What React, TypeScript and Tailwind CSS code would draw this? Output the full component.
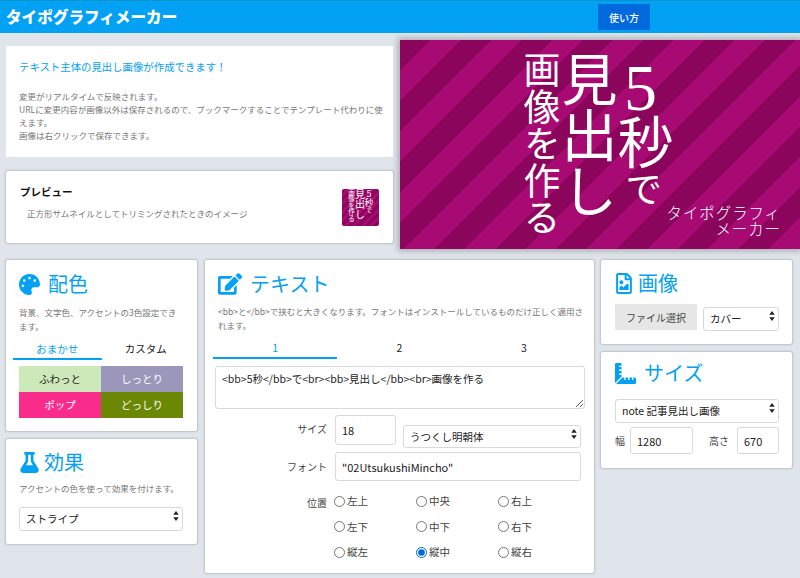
import { useState } from "react";
import { FaPalette, FaEdit, FaFlask, FaRegFileImage, FaRulerCombined } from "react-icons/fa";

const fontStack = "font-['Noto_Sans_CJK_JP','Noto_Sans',sans-serif]";
const stripes =
  "bg-[repeating-linear-gradient(135deg,#8b055c_0,#8b055c_21.5px,#a80a74_21.5px,#a80a74_43px)]";
const card = "bg-white rounded-[2px] shadow-[0_0_2px_1px_rgba(0,0,0,0.16)]";

const presets = [
  { label: "ふわっと", className: "bg-[#cde9b9] text-[#222]" },
  { label: "しっとり", className: "bg-[#9a97ba] text-white" },
  { label: "ポップ", className: "bg-[#f92b8b] text-white" },
  { label: "どっしり", className: "bg-[#6a8803] text-white" },
];

const positions = ["左上", "中央", "右上", "左下", "中下", "右下", "縦左", "縦中", "縦右"];

function Heading({ icon, label, gap }: { icon: React.ReactNode; label: string; gap: string }) {
  return (
    <div className={`flex items-center text-[#03a1f4] ${gap}`}>
      {icon}
      <span className="text-[20px] leading-[24px]">{label}</span>
    </div>
  );
}

function SelectBox({ value, className }: { value: string; className: string }) {
  return (
    <div className={`relative ${className}`}>
      <select
        defaultValue={value}
        className="h-full w-full appearance-none rounded-[3px] border border-[#d9d9d9] bg-white pl-[6px] text-[10.5px] text-[#222] outline-none"
      >
        <option>{value}</option>
      </select>
      <svg viewBox="0 0 6 11" className="pointer-events-none absolute right-[4px] top-1/2 h-[10px] w-[6px] -translate-y-1/2" fill="#222">
        <path d="M3 0 L6 4 H0 Z M3 11 L0 7 H6 Z" />
      </svg>
    </div>
  );
}

function TextBox({ value, className }: { value: string; className: string }) {
  return (
    <input
      readOnly
      value={value}
      className={`rounded-[3px] border border-[#d9d9d9] bg-white pl-[6px] text-[11px] text-[#222] outline-none ${className}`}
    />
  );
}

function Tabs({ items, tabWidth }: { items: string[]; tabWidth: string }) {
  return (
    <div className="flex">
      {items.map((t, i) => (
        <div
          key={t}
          className={`${tabWidth} h-[19px] text-center text-[10.5px] leading-[16px] ${
            i === 0 ? "border-b-2 border-[#03a1f4] text-[#03a1f4]" : "text-[#222]"
          }`}
        >
          {t}
        </div>
      ))}
    </div>
  );
}

function Artwork() {
  return (
    <div className={`relative h-[209px] w-[400px] overflow-hidden shadow-[0_0_6px_2px_rgba(0,0,0,0.25)] ${stripes}`}>
      <div className="flex h-full w-full flex-col justify-center pr-[12px] pt-[11px] text-white [text-orientation:upright] [writing-mode:vertical-rl] font-['Liberation_Serif','Noto_Sans_CJK_JP',serif]">
        <div className="w-[56px] text-[37px] leading-[56px]">
          <span className="text-[56px]">
            <span className="-mb-[10px] text-[66px]">5</span>秒
          </span>
          で
        </div>
        <div className="w-[56px] text-[56px] leading-[56px]">見出し</div>
        <div className="w-[36px] text-[37px] leading-[36px]">画像を作る</div>
      </div>
      <div className="absolute bottom-[13px] right-[19px] text-right text-[15.4px] font-extralight leading-[16px] tracking-[1px] text-white">
        タイポグラフィ
        <br />
        メーカー
      </div>
    </div>
  );
}

function Thumbnail() {
  return (
    <div className="flex h-[37px] w-[37px] flex-col justify-center overflow-hidden rounded-[2px] bg-[repeating-linear-gradient(135deg,#8b055c_0,#8b055c_3px,#a80a74_3px,#a80a74_6px)] text-white [text-orientation:upright] [writing-mode:vertical-rl]">
      <div className="w-[9px] text-[6px] leading-[9px]">
        <span className="text-[9px]">5秒</span>で
      </div>
      <div className="w-[9px] text-[10px] leading-[9px]">見出し</div>
      <div className="w-[8px] text-[6.5px] leading-[8px]">画像を作る</div>
    </div>
  );
}

export default function App() {
  const [pos, setPos] = useState("縦中");

  return (
    <div className={`h-[578px] w-[800px] overflow-hidden bg-[#e0e5ec] ${fontStack}`}>
      <header className="flex h-[33px] items-center border-t border-[#0a94c8] bg-[#03a1f4] pl-[6px]">
        <h1 className="w-[592px] text-[15.6px] font-black text-white">タイポグラフィメーカー</h1>
        <button className="h-[26px] w-[52px] bg-[#0069db] text-[10px] font-medium text-white">使い方</button>
      </header>

      <div className="flex pt-[7px]">
        <div className="ml-[6px] mr-[7px] flex w-[387px] flex-col pt-[6px]">
          <section className="h-[111px] bg-white pl-[13px] pr-[6px] pt-[13px]">
            <p className="text-[10.4px] leading-[16px] text-[#03a1f4]">テキスト主体の見出し画像が作成できます！</p>
            <p className="mt-[15px] text-[8.5px] leading-[13px] text-[#777]">
              変更がリアルタイムで反映されます。
              <br />
              URLに変更内容が画像以外は保存されるので、ブックマークすることでテンプレート代わりに使えます。
              <br />
              画像は右クリックで保存できます。
            </p>
          </section>
          <section className={`mt-[14px] flex h-[72px] items-center justify-between pl-[14px] pr-[14px] ${card}`}>
            <div className="pb-[10px]">
              <h2 className="text-[10.5px] font-bold leading-[16px] text-[#111]">プレビュー</h2>
              <p className="mt-[7px] pl-[7px] text-[8.5px] leading-[13px] text-[#777]">正方形サムネイルとしてトリミングされたときのイメージ</p>
            </div>
            <Thumbnail />
          </section>
        </div>
        <Artwork />
      </div>

      <div className="flex gap-[8px] pl-[6px] pt-[10px]">
        <div className="flex w-[191px] flex-col gap-[8px]">
          <section className={`mt-[1px] h-[171px] pl-[13px] pr-[13px] pt-[12px] ${card}`}>
            <Heading icon={<FaPalette className="h-[21px] w-[21px]" />} label="配色" gap="gap-[8px]" />
            <p className="mt-[9px] text-[8.5px] leading-[14px] text-[#777]">背景、文字色、アクセントの3色設定できます。</p>
            <div className="-mx-[6px] mt-[8px]">
              <Tabs items={["おまかせ", "カスタム"]} tabWidth="w-[89px]" />
            </div>
            <div className="mt-[6px] grid grid-cols-[82px_82px] text-[10.5px]">
              {presets.map((p) => (
                <div key={p.label} className={`flex h-[26px] items-center justify-center ${p.className}`}>
                  {p.label}
                </div>
              ))}
            </div>
          </section>
          <section className={`h-[105px] pl-[13px] pr-[13px] pt-[11px] ${card}`}>
            <Heading icon={<FaFlask className="h-[21px] w-[21px]" />} label="効果" gap="gap-[4px]" />
            <p className="mt-[8px] text-[8.5px] leading-[13px] text-[#777]">アクセントの色を使って効果を付けます。</p>
            <SelectBox value="ストライプ" className="mt-[9px] h-[24px] w-[164px]" />
          </section>
        </div>

        <section className={`mt-[1px] h-[313px] w-[389px] px-[8px] pt-[12px] ${card}`}>
          <div className="pl-[5px]">
            <Heading icon={<FaEdit className="h-[24px] w-[24px]" />} label="テキスト" gap="gap-[8px]" />
            <p className="mt-[8px] text-[8.5px] leading-[14px] text-[#777]">
              &lt;bb&gt;と&lt;/bb&gt;で挟むと大きくなります。フォントはインストールしているものだけ正しく適用されます。
            </p>
          </div>
          <div className="mt-[8px]">
            <Tabs items={["1", "2", "3"]} tabWidth="w-[125px]" />
          </div>
          <textarea
            readOnly
            value="<bb>5秒</bb>で<br><bb>見出し</bb><br>画像を作る"
            className="mt-[7px] ml-[2px] block h-[43px] w-[370px] rounded-[3px] border border-[#d9d9d9] px-[6px] py-[4px] text-[10.5px] text-[#222] outline-none"
          />
          <div className="mt-[6px] flex items-start">
            <label className="w-[122px] pr-[8px] pt-[6px] text-right text-[10px] text-[#444]">サイズ</label>
            <TextBox value="18" className="h-[30px] w-[61px]" />
            <SelectBox value="うつくし明朝体" className="ml-[7px] mt-[7px] h-[23px] w-[178px]" />
          </div>
          <div className="mt-[7px] flex items-center">
            <label className="w-[122px] pr-[8px] text-right text-[10px] text-[#444]">フォント</label>
            <TextBox value={'"02UtsukushiMincho"'} className="h-[29px] w-[246px]" />
          </div>
          <div className="mt-[12px] flex">
            <label className="w-[121px] pr-[7px] pt-[2px] text-right text-[10px] leading-[16px] text-[#444]">位置</label>
            <div className="grid grid-cols-[82px_82px_82px] gap-y-[9.5px]">
              {positions.map((p) => (
                <label key={p} className="flex h-[16px] items-center gap-[2px] text-[10.5px] text-[#444]">
                  <input
                    type="radio"
                    name="pos"
                    checked={pos === p}
                    onChange={() => setPos(p)}
                    className="m-0 h-[11px] w-[11px] accent-[#0069db]"
                  />
                  {p}
                </label>
              ))}
            </div>
          </div>
        </section>

        <div className="-ml-[1px] mt-[1px] flex w-[191px] flex-col gap-[8px]">
          <section className={`h-[84px] pl-[14px] pr-[13px] pt-[11px] ${card}`}>
            <Heading icon={<FaRegFileImage className="h-[21px] w-[18px]" />} label="画像" gap="gap-[5px]" />
            <div className="mt-[9px] flex gap-[6px]">
              <button className="h-[26px] w-[82px] bg-[#e6e6e6] text-[10px] text-[#444]">ファイル選択</button>
              <SelectBox value="カバー" className="h-[24px] w-[76px]" />
            </div>
          </section>
          <section className={`h-[116px] pl-[14px] pr-[13px] pt-[9px] ${card}`}>
            <Heading icon={<FaRulerCombined className="h-[21px] w-[21px]" />} label="サイズ" gap="gap-[8px]" />
            <SelectBox value="note 記事見出し画像" className="mt-[11px] h-[24px] w-[164px]" />
            <div className="mt-[7px] flex items-center text-[10px] text-[#444]">
              <span className="w-[15px]">幅</span>
              <TextBox value="1280" className="h-[27px] w-[63px]" />
              <span className="ml-[16px] w-[27px]">高さ</span>
              <TextBox value="670" className="ml-[1px] h-[27px] w-[42px]" />
            </div>
          </section>
        </div>
      </div>
    </div>
  );
}
